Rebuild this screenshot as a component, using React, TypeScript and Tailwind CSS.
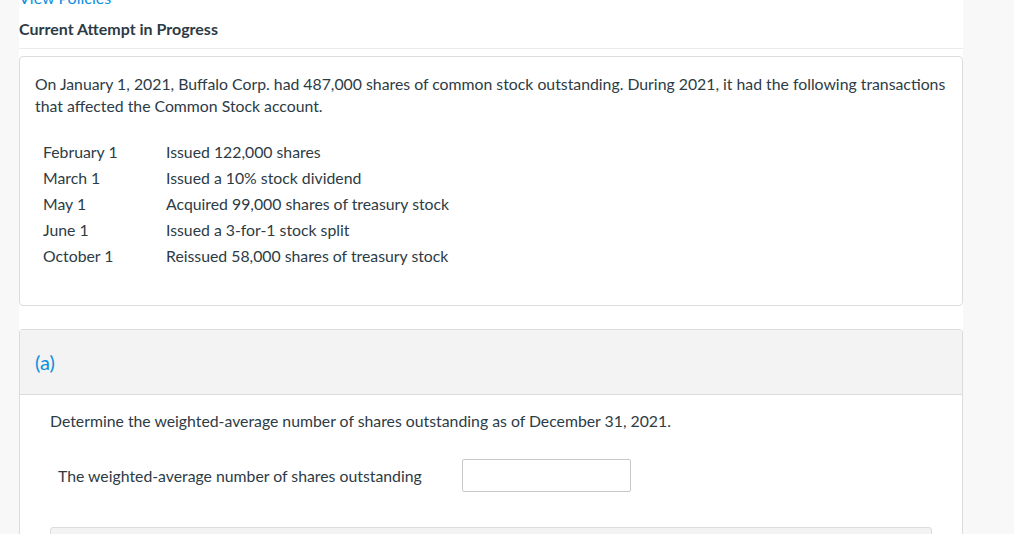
import React from 'react';

const rows = [
  ['February 1', 'Issued 122,000 shares'],
  ['March 1', 'Issued a 10% stock dividend'],
  ['May 1', 'Acquired 99,000 shares of treasury stock'],
  ['June 1', 'Issued a 3-for-1 stock split'],
  ['October 1', 'Reissued 58,000 shares of treasury stock'],
];

const App = () => {
  return (
    <div className="flex h-[534px] overflow-hidden bg-[#f8f8f8] text-[#2d3b45] font-['Lato','Open_Sans',sans-serif]">
      <div className="w-[19px] shrink-0" />
      <div className="w-[944px] shrink-0 bg-white">
        {/* header */}
        <div className="-mt-[12px] text-[16px] leading-[20px] text-[#0a8fdd]">View Policies</div>
        <h1 className="mt-[11px] text-[16px] font-bold leading-[20px]">Current Attempt in Progress</h1>
        <div className="mt-[9px] border-t border-[#ebebeb]" />

        {/* question card */}
        <div className="mt-[7px] h-[250px] rounded-[4px] border border-[#dcdcdc] px-[15px] pt-[16px]">
          <p className="text-[15.8px] leading-[22px]">
            On January 1, 2021, Buffalo Corp. had 487,000 shares of common stock outstanding. During 2021, it had the following transactions
            that affected the Common Stock account.
          </p>
          <div className="mt-[22px] flex flex-col pl-[8px] text-[15.8px] leading-[26px]">
            {rows.map(([date, text]) => (
              <div key={date} className="flex">
                <span className="w-[123px] shrink-0">{date}</span>
                <span>{text}</span>
              </div>
            ))}
          </div>
        </div>

        {/* part (a) */}
        <div className="mt-[23px] rounded-t-[4px] border border-b-0 border-[#dcdcdc]">
          <div className="flex h-[65px] items-center border-b border-[#dcdcdc] bg-[#f3f3f3] px-[15px]">
            <span className="text-[20px] leading-[24px] text-[#0a8fdd]">(a)</span>
          </div>
          <div className="px-[30px] pt-[15px]">
            <p className="text-[15.8px] leading-[22px]">
              Determine the weighted-average number of shares outstanding as of December 31, 2021.
            </p>
            <div className="mt-[27px] flex items-center pl-[8px]">
              <span className="w-[404px] shrink-0 text-[15.8px] leading-[22px]">The weighted-average number of shares outstanding</span>
              <input className="h-[33px] w-[169px] rounded-[2px] border border-[#c8c8c8] bg-white" />
            </div>
            <div className="mt-[35px] h-[20px] rounded-t-[3px] border border-[#dcdcdc] bg-[#f3f3f3]" />
          </div>
        </div>
      </div>
      <div className="flex-1" />
    </div>
  );
};

export default App;
